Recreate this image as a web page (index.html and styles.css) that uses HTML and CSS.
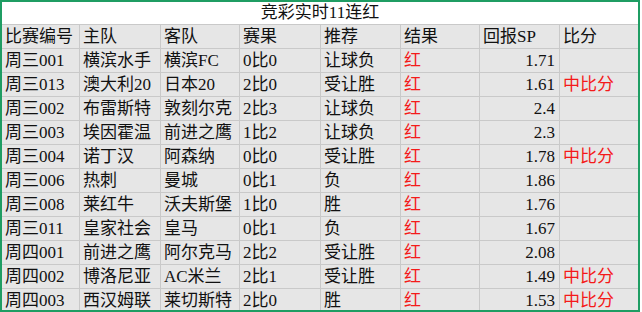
FILE: index.html
```html
<!DOCTYPE html>
<html lang="zh">
<head>
<meta charset="utf-8">
<link rel="stylesheet" href="styles.css">
</head>
<body>
<div class="sheet">
  <div class="title">竞彩实时11连红</div>
  <div class="row head">
    <div class="c">比赛编号</div><div class="c">主队</div><div class="c">客队</div><div class="c">赛果</div><div class="c">推荐</div><div class="c">结果</div><div class="c">回报SP</div><div class="c">比分</div>
  </div>
  <div class="row"><div class="c">周三001</div><div class="c">横滨水手</div><div class="c">横滨FC</div><div class="c">0比0</div><div class="c">让球负</div><div class="c red">红</div><div class="c num">1.71</div><div class="c red"></div></div>
  <div class="row"><div class="c">周三013</div><div class="c">澳大利20</div><div class="c">日本20</div><div class="c">2比0</div><div class="c">受让胜</div><div class="c red">红</div><div class="c num">1.61</div><div class="c red">中比分</div></div>
  <div class="row"><div class="c">周三002</div><div class="c">布雷斯特</div><div class="c">敦刻尔克</div><div class="c">2比3</div><div class="c">让球负</div><div class="c red">红</div><div class="c num">2.4</div><div class="c red"></div></div>
  <div class="row"><div class="c">周三003</div><div class="c">埃因霍温</div><div class="c">前进之鹰</div><div class="c">1比2</div><div class="c">让球负</div><div class="c red">红</div><div class="c num">2.3</div><div class="c red"></div></div>
  <div class="row"><div class="c">周三004</div><div class="c">诺丁汉</div><div class="c">阿森纳</div><div class="c">0比0</div><div class="c">受让胜</div><div class="c red">红</div><div class="c num">1.78</div><div class="c red">中比分</div></div>
  <div class="row"><div class="c">周三006</div><div class="c">热刺</div><div class="c">曼城</div><div class="c">0比1</div><div class="c">负</div><div class="c red">红</div><div class="c num">1.86</div><div class="c red"></div></div>
  <div class="row"><div class="c">周三008</div><div class="c">莱红牛</div><div class="c">沃夫斯堡</div><div class="c">1比0</div><div class="c">胜</div><div class="c red">红</div><div class="c num">1.76</div><div class="c red"></div></div>
  <div class="row"><div class="c">周三011</div><div class="c">皇家社会</div><div class="c">皇马</div><div class="c">0比1</div><div class="c">负</div><div class="c red">红</div><div class="c num">1.67</div><div class="c red"></div></div>
  <div class="row"><div class="c">周四001</div><div class="c">前进之鹰</div><div class="c">阿尔克马</div><div class="c">2比2</div><div class="c">受让胜</div><div class="c red">红</div><div class="c num">2.08</div><div class="c red"></div></div>
  <div class="row"><div class="c">周四002</div><div class="c">博洛尼亚</div><div class="c">AC米兰</div><div class="c">2比1</div><div class="c">受让胜</div><div class="c red">红</div><div class="c num">1.49</div><div class="c red">中比分</div></div>
  <div class="row"><div class="c">周四003</div><div class="c">西汉姆联</div><div class="c">莱切斯特</div><div class="c">2比0</div><div class="c">胜</div><div class="c red">红</div><div class="c num">1.53</div><div class="c red">中比分</div></div>
</div>
</body>
</html>
```

FILE: styles.css
```css
html, body {
  margin: 0;
  padding: 0;
  background: #ffffff;
}
.sheet {
  width: 636px;
  height: 308px;
  border: 2px solid #1f9d63;
  overflow: hidden;
  background: #ffffff;
  font-family: "Liberation Serif", "Noto Sans CJK SC", serif;
  font-size: 17px;
  color: #111111;
}
.title {
  height: 22px;
  line-height: 22px;
  text-align: center;
  background: #ffffff;
}
.row {
  display: grid;
  grid-template-columns: 78px 81px 79px 81px 80px 79px 80px 78px;
  height: 23px;
  border-top: 1px solid #c9c9c9;
  background: #e6e6e6;
}
.c {
  border-right: 1px solid #c9c9c9;
  padding: 0 3px;
  line-height: 24px;
  white-space: nowrap;
  overflow: hidden;
}
.c:last-child {
  border-right: none;
}
.num {
  text-align: right;
  padding-right: 4px;
}
.red {
  color: #f41a1a;
}
```
